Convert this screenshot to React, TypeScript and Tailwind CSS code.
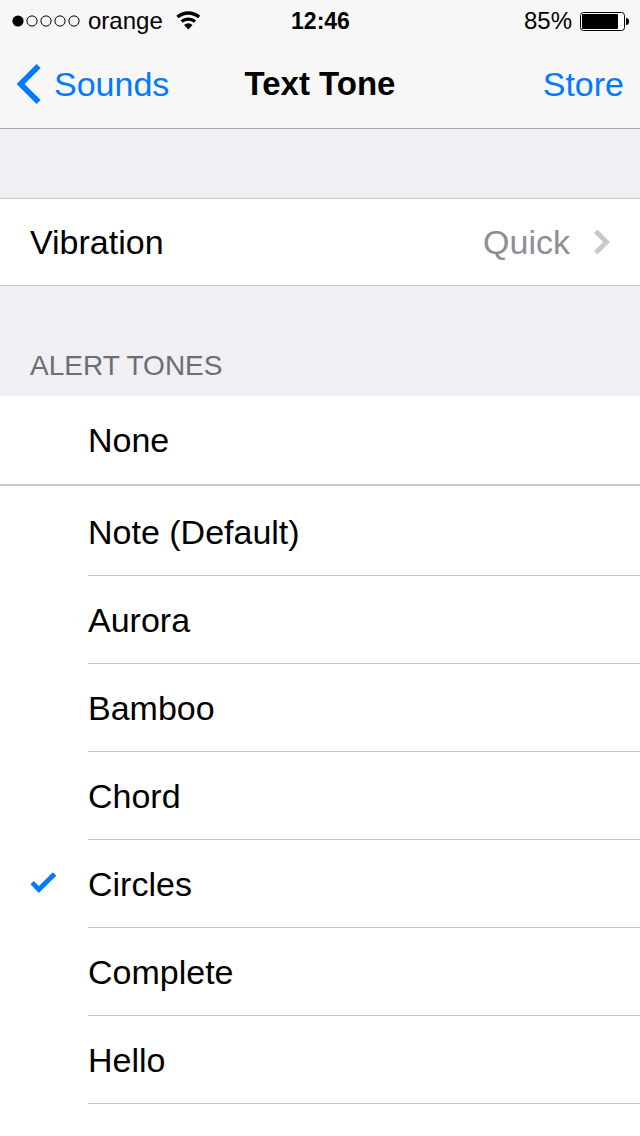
import { useState } from "react";

const tones = [
  "Note (Default)",
  "Aurora",
  "Bamboo",
  "Chord",
  "Circles",
  "Complete",
  "Hello",
  "Input",
];

const SignalDots = () => (
  <svg width="68" height="12" viewBox="0 0 68 12" fill="none" role="img" aria-label="Signal">
    <circle cx="6" cy="6" r="5.6" fill="#000" />
    {[20, 34, 48, 62].map((cx) => (
      <circle key={cx} cx={cx} cy="6" r="5.1" stroke="#000" strokeWidth="1" />
    ))}
  </svg>
);

const WifiIcon = () => (
  <svg width="25" height="20" viewBox="0 0 25 20" fill="none" role="img" aria-label="Wi-Fi">
    <path d="M1.5 6a16.4 16.4 0 0 1 21.6 0" stroke="#000" strokeWidth="3.6" />
    <path d="M5.6 10.6a10.3 10.3 0 0 1 13.4 0" stroke="#000" strokeWidth="3.3" />
    <path d="M12.3 18.4l-4.2-4.4a6.2 6.2 0 0 1 8.4 0z" fill="#000" />
  </svg>
);

const BatteryIcon = () => (
  <svg width="49" height="19" viewBox="0 0 49 19" fill="none" role="img" aria-label="Battery">
    <rect x="0.5" y="0.5" width="44" height="18" rx="3" fill="#fff" stroke="#000" />
    <rect x="2" y="2" width="36" height="15" rx="1" fill="#000" />
    <path d="M46 6q3 0 3 3.5t-3 3.5z" fill="#000" />
  </svg>
);

const ToneRow = ({
  name,
  checked,
  onSelect,
}: {
  name: string;
  checked: boolean;
  onSelect: (name: string) => void;
}) => (
  <label className="flex h-[88px] cursor-pointer">
    <input
      type="radio"
      name="tone"
      className="sr-only"
      checked={checked}
      onChange={() => onSelect(name)}
    />
    <span className="flex w-[88px] shrink-0 items-center pb-1 pl-[30px]">
      {checked && (
        <svg width="27" height="21" viewBox="0 0 27 21" fill="none" aria-hidden="true">
          <path d="M2.2 10.7l6.6 6.8L24.6 2" stroke="#007aff" strokeWidth="4.8" />
        </svg>
      )}
    </span>
    <span className="flex flex-1 items-center border-b border-[#c8c7cc]">{name}</span>
  </label>
);

const App = () => {
  const [selected, setSelected] = useState("Circles");

  return (
    <div className="flex h-screen flex-col overflow-hidden bg-[#efeff4] font-['Liberation_Sans',Arial,sans-serif] text-[34px] leading-10 text-black">
      <header className="shrink-0 border-b border-[#a7a7aa] bg-[#f7f7f7]">
        <div className="grid h-10 grid-cols-[1fr_auto_1fr] items-center pt-0.5 pr-[11px] pl-3 text-2xl">
          <div className="flex items-center">
            <SignalDots />
            <span className="mr-[13px] ml-2">orange</span>
            <WifiIcon />
          </div>
          <span className="text-[23px] font-bold">12:46</span>
          <div className="flex items-center justify-end gap-2">
            <span>85%</span>
            <BatteryIcon />
          </div>
        </div>
        <nav className="grid h-[88px] grid-cols-[1fr_auto_1fr] items-center px-4">
          <button type="button" className="flex items-center gap-3 text-[#007aff]">
            <svg width="26" height="40" viewBox="0 0 26 40" fill="none" aria-hidden="true">
              <path d="M22.6 2L4.6 20l18 18" stroke="#007aff" strokeWidth="5.6" />
            </svg>
            Sounds
          </button>
          <h1 className="text-[33px] font-bold">Text Tone</h1>
          <button type="button" className="justify-self-end text-[#007aff]">
            Store
          </button>
        </nav>
      </header>

      <main className="min-h-0 flex-1 overflow-y-auto pt-[69px] [scrollbar-width:none]">
        <button
          type="button"
          className="flex h-[88px] w-full items-center border-y border-[#c8c7cc] bg-white px-[30px]"
        >
          <span>Vibration</span>
          <span className="mr-6 ml-auto text-[#8e8e93]">Quick</span>
          <svg width="16" height="26" viewBox="0 0 16 26" fill="none" aria-hidden="true">
            <path d="M1.7 2.2L12.6 13 1.7 23.8" stroke="#c7c7cc" strokeWidth="4.8" />
          </svg>
        </button>

        <h2 className="flex h-[110px] items-end px-[30px] pb-3 text-[28px] leading-9 text-[#6d6d72]">
          ALERT TONES
        </h2>

        <div role="radiogroup" aria-label="Alert tones" className="bg-white">
          <div className="border-b-2 border-[#c8c7cc]">
            <label className="flex h-[88px] cursor-pointer items-center pl-[88px]">
              <input
                type="radio"
                name="tone"
                className="sr-only"
                checked={selected === "None"}
                onChange={() => setSelected("None")}
              />
              None
            </label>
          </div>
          <div className="pt-0.5">
            {tones.map((tone) => (
              <ToneRow
                key={tone}
                name={tone}
                checked={selected === tone}
                onSelect={setSelected}
              />
            ))}
          </div>
        </div>
      </main>
    </div>
  );
};

export default App;
